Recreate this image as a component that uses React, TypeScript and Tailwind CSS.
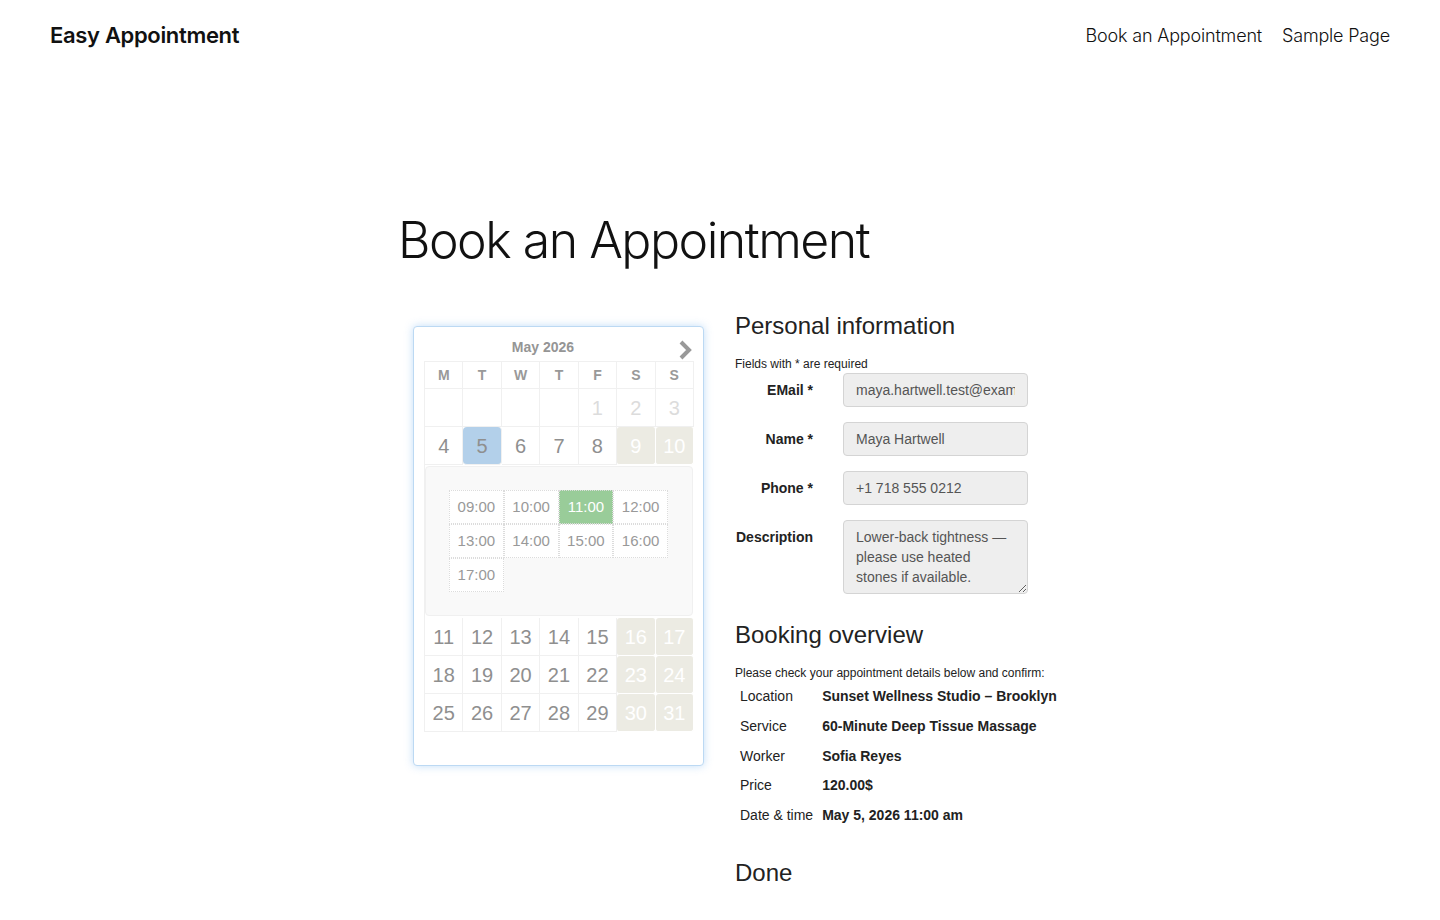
import { useState } from 'react';

const weekdays = ['M', 'T', 'W', 'T', 'F', 'S', 'S'];
const times = ['09:00', '10:00', '11:00', '12:00', '13:00', '14:00', '15:00', '16:00', '17:00'];

type Day = { n?: number; past?: boolean };

const firstWeeks: Day[][] = [
  [{}, {}, {}, {}, { n: 1, past: true }, { n: 2, past: true }, { n: 3, past: true }],
  [{ n: 4 }, { n: 5 }, { n: 6 }, { n: 7 }, { n: 8 }, { n: 9 }, { n: 10 }],
];

const laterWeeks: Day[][] = [11, 18, 25].map((start) =>
  Array.from({ length: 7 }, (_, i) => ({ n: start + i }))
);

function DayCell({ day, col, selected }: { day: Day; col: number; selected: boolean }) {
  const weekend = col >= 5 && day.n !== undefined && !day.past;
  let cls = 'h-[38px] flex items-center justify-center text-[20px] border-r border-b border-[#f0f0f0]';
  if (day.past) cls += ' text-[#dcdcdc]';
  else if (selected) cls += ' bg-[#b3d0ea] text-[#8f8f8f] rounded-[4px]';
  else if (weekend) cls += ' bg-[#ecebe3] text-white rounded-[3px] border-white';
  else cls += ' text-[#8f8f8f]';
  return <div className={cls}>{day.n ?? ''}</div>;
}

function Calendar() {
  const [selectedTime, setSelectedTime] = useState('11:00');
  const selectedDay = 5;

  const renderWeek = (week: Day[], key: number) => (
    <div key={key} className="grid grid-cols-7">
      {week.map((d, i) => (
        <DayCell key={i} day={d} col={i} selected={d.n === selectedDay} />
      ))}
    </div>
  );

  return (
    <div className="w-[291px] h-[440px] rounded-[4px] border border-[#bcd9f3] bg-white shadow-[0_0_8px_rgba(120,180,240,0.45)] px-[10px] pt-[7px]">
      <div className="relative h-[27px] flex items-center justify-center pr-[31px]">
        <span className="text-[14px] font-bold text-[#959595]">May 2026</span>
        <svg className="absolute right-[1px] top-[6px]" width="14" height="20" viewBox="0 0 14 20">
          <path d="M3 2 L11 10 L3 18" fill="none" stroke="#999" strokeWidth="4" />
        </svg>
      </div>
      <div className="w-[270px] border-l border-t border-[#f0f0f0]">
        <div className="grid grid-cols-7">
          {weekdays.map((w, i) => (
            <div
              key={i}
              className="h-[27px] flex items-center justify-center text-[14px] font-bold text-[#999] border-r border-b border-[#f0f0f0]"
            >
              {w}
            </div>
          ))}
        </div>
        {firstWeeks.map(renderWeek)}
        <div className="mt-[1px] mr-[1px] mb-[2px] h-[150px] rounded-[4px] bg-[#f9f9f9] border border-[#f0f0f0] pl-[23px] pt-[23px]">
          <div className="grid grid-cols-4 w-[219px]">
            {times.map((t) => (
              <button
                key={t}
                onClick={() => setSelectedTime(t)}
                className={`h-[34px] flex items-center justify-center text-[15px] border border-dotted border-[#dcdcdc] ${
                  t === selectedTime ? 'bg-[#99cc99] text-white' : 'bg-white text-[#999]'
                }`}
              >
                {t}
              </button>
            ))}
          </div>
        </div>
        {laterWeeks.map(renderWeek)}
      </div>
    </div>
  );
}

function Field({ label, value }: { label: string; value: string }) {
  return (
    <div className="flex items-center">
      <label className="w-[78px] text-right text-[14px] font-bold text-[#222]">{label}</label>
      <input
        readOnly
        value={value}
        className="ml-[30px] w-[185px] h-[34px] rounded-[4px] border border-[#d4d4d4] bg-[#eeeeee] px-[12px] text-[14px] text-[#555] outline-none"
      />
    </div>
  );
}

const overview = [
  ['Location', 'Sunset Wellness Studio – Brooklyn'],
  ['Service', '60-Minute Deep Tissue Massage'],
  ['Worker', 'Sofia Reyes'],
  ['Price', '120.00$'],
  ['Date & time', 'May 5, 2026 11:00 am'],
];

export default function App() {
  return (
    <div className="min-h-[920px] bg-white text-[#111]">
      <header className="h-[70px] px-[50px] flex items-center justify-between font-['Inter',sans-serif]">
        <a className="text-[22px] font-semibold tracking-[-0.015em] text-[#111]">Easy Appointment</a>
        <nav className="flex gap-[20px] text-[18px] font-light tracking-[-0.01em] text-[#111]">
          <a>Book an Appointment</a>
          <a>Sample Page</a>
        </nav>
      </header>

      <main className="pl-[398px] pt-[136px]">
        <h1 className="font-['Inter',sans-serif] text-[50px] font-light tracking-[-0.03em] leading-[68px] text-[#111]">
          Book an Appointment
        </h1>

        <div className="mt-[38px] flex font-['Liberation_Sans',Arial,sans-serif]">
          <div className="ml-[15px] mt-[14px]">
            <Calendar />
          </div>

          <div className="ml-[31px]">
            <h3 className="text-[24px] leading-[28px] text-[#222]">Personal information</h3>
            <p className="mt-[15px] text-[12px] text-[#222]">Fields with * are required</p>
            <div className="flex flex-col gap-[15px]">
              <Field label="EMail *" value="maya.hartwell.test@example.com" />
              <Field label="Name *" value="Maya Hartwell" />
              <Field label="Phone *" value="+1 718 555 0212" />
              <div className="flex items-start">
                <label className="w-[78px] pt-[7px] text-right text-[14px] font-bold text-[#222]">Description</label>
                <textarea
                  readOnly
                  value="Lower-back tightness — please use heated stones if available."
                  className="ml-[30px] w-[185px] h-[74px] rounded-[4px] border border-[#d4d4d4] bg-[#eeeeee] px-[12px] py-[6px] text-[14px] leading-[20px] text-[#555] outline-none"
                />
              </div>
            </div>

            <h3 className="mt-[27px] text-[24px] leading-[28px] text-[#222]">Booking overview</h3>
            <p className="mt-[15px] text-[12px] text-[#222]">Please check your appointment details below and confirm:</p>
            <table className="text-[14px] text-[#222] border-separate border-spacing-0">
              <tbody>
                {overview.map(([k, v]) => (
                  <tr key={k} className="h-[29.7px]">
                    <td className="pl-[5px] pr-[9px] align-middle">{k}</td>
                    <td className="font-bold align-middle">{v}</td>
                  </tr>
                ))}
              </tbody>
            </table>

            <h3 className="mt-[29px] text-[24px] leading-[28px] text-[#222]">Done</h3>
          </div>
        </div>
      </main>
    </div>
  );
}
